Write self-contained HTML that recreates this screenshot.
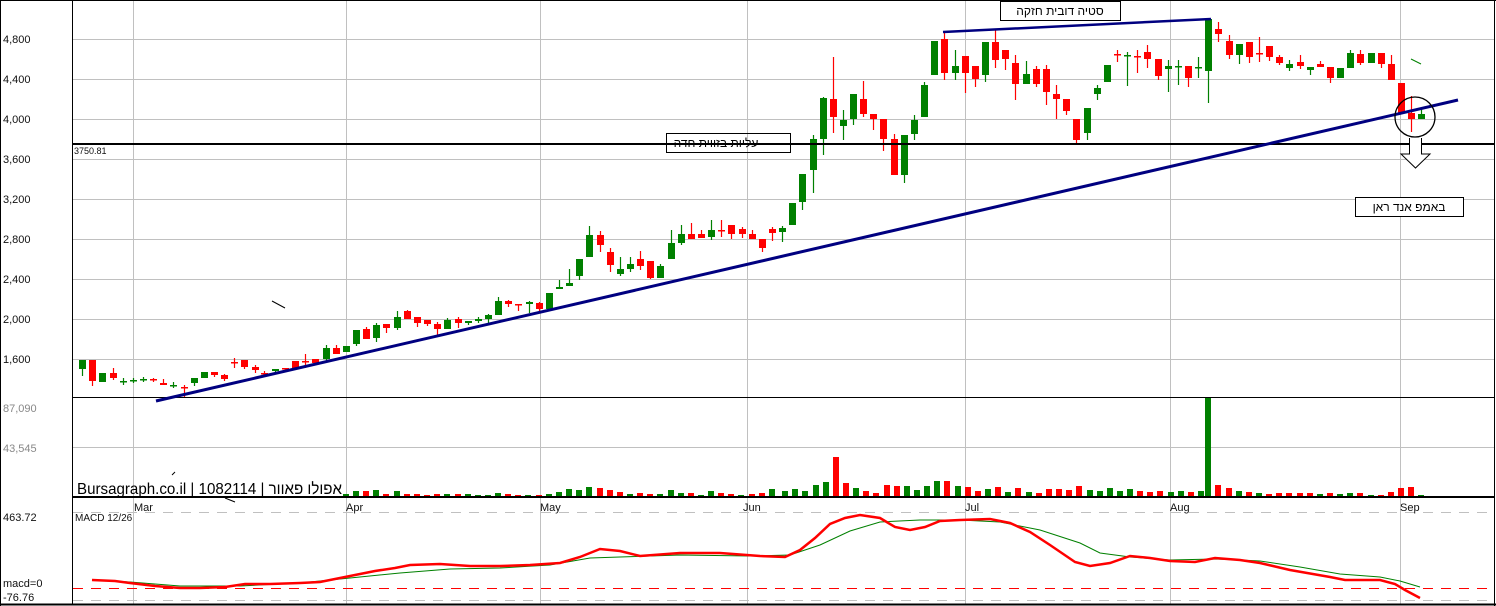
<!DOCTYPE html>
<html><head><meta charset="utf-8"><style>
html,body{margin:0;padding:0;background:#fff;}
svg{display:block;font-family:"Liberation Sans",Arial,"Noto Sans CJK SC",sans-serif;}
</style></head><body>
<svg id="s" xmlns="http://www.w3.org/2000/svg" width="1496" height="606" viewBox="0 0 1496 606">
<rect width="1496" height="606" fill="#fff"/>
<g id="grid" stroke="#c0c0c0" stroke-width="1"></g>
<g id="vol"></g>
<g id="cand"></g>
<g stroke="#000" fill="none">
<line x1="0.5" y1="0" x2="0.5" y2="606" stroke-width="1"/>
<line x1="0" y1="0.5" x2="1496" y2="0.5" stroke-width="1"/>
<line x1="1494.5" y1="0" x2="1494.5" y2="606" stroke-width="1"/>
<line x1="72.5" y1="0" x2="72.5" y2="605" stroke-width="1"/>
<line x1="72" y1="397.5" x2="1495" y2="397.5" stroke-width="1"/>
<line x1="72" y1="497" x2="1495" y2="497" stroke-width="2"/>
<line x1="0" y1="604.5" x2="1496" y2="604.5" stroke-width="2"/>
<line x1="72" y1="144" x2="1495" y2="144" stroke-width="2"/>
</g>
<g stroke="#c0c0c0" stroke-dasharray="10,8"><line x1="73" y1="512.5" x2="1494" y2="512.5"/><line x1="73" y1="600.5" x2="1494" y2="600.5"/></g>
<line x1="73" y1="588.5" x2="1494" y2="588.5" stroke="#ff0000" stroke-dasharray="10,8"/>
<line x1="156" y1="401" x2="1458" y2="100" stroke="#000080" stroke-width="3"/>
<line x1="943" y1="32" x2="1211" y2="19" stroke="#000080" stroke-width="2.5"/>
<rect x="1000.5" y="1.5" width="120" height="19" fill="none" stroke="#000"/>
<text x="1060" y="15" font-size="12" text-anchor="middle" fill="#000">סטיה דובית חזקה</text>
<rect x="666.5" y="133.5" width="124" height="19" fill="none" stroke="#000"/>
<text x="716" y="147" font-size="12" text-anchor="middle" fill="#000">עליות בזווית חדה</text>
<rect x="1355.5" y="197.5" width="108" height="19" fill="#fff" stroke="#000"/>
<text x="1409" y="211" font-size="12" text-anchor="middle" fill="#000">באמפ אנד ראן</text>
<circle cx="1415" cy="117" r="20" fill="none" stroke="#000" stroke-width="1.3"/>
<path d="M1409.5 138 V154 H1401 L1415.5 168 L1430 154 H1421.5 V138" fill="#fff" stroke="#000" stroke-width="1"/>
<line x1="1411" y1="59" x2="1421" y2="64" stroke="#008000"/>
<line x1="272" y1="301" x2="285" y2="308" stroke="#000"/>
<line x1="225" y1="498" x2="235" y2="502" stroke="#000"/>
<line x1="172" y1="475" x2="175" y2="472" stroke="#000"/>
<g font-size="11" fill="#111">
<text x="3" y="43">4,800</text><text x="3" y="83">4,400</text><text x="3" y="123">4,000</text>
<text x="3" y="163">3,600</text><text x="3" y="203">3,200</text><text x="3" y="243">2,800</text>
<text x="3" y="283">2,400</text><text x="3" y="323">2,000</text><text x="3" y="363">1,600</text>
<text x="74" y="154" font-size="9">3750.81</text>
<text x="3" y="412" fill="#888">87,090</text><text x="3" y="452" fill="#888">43,545</text>
<text x="3" y="521">463.72</text><text x="75" y="521" font-size="10">MACD 12/26</text>
<text x="3" y="587">macd=0</text><text x="3" y="601">-76.76</text>
<text x="134" y="511">Mar</text><text x="346" y="511">Apr</text><text x="540" y="511">May</text>
<text x="743" y="511">Jun</text><text x="965" y="511">Jul</text><text x="1170" y="511">Aug</text><text x="1400" y="511">Sep</text>
</g>
<text x="77" y="494" font-size="16" fill="#000" textLength="265" lengthAdjust="spacingAndGlyphs">Bursagraph.co.il | 1082114 | אפולו פאוור</text>
<polyline fill="none" stroke="#008000" stroke-width="1" points="92,580 130,582 180,586 240,586 300,583 350,578 400,573 450,569 500,568 550,565 590,558 620,557 680,555 750,556 790,555 820,545 850,531 880,522 920,520 960,520 1000,522 1040,530 1080,543 1100,553 1130,557 1170,560 1215,559 1240,560 1260,561 1300,567 1340,574 1380,577 1400,581 1420,587"/>
<polyline fill="none" stroke="#ff0000" stroke-width="2.5" points="92,580 115,581 130,583 155,586 180,588 200,588 225,587 245,584 270,584 300,583 320,582 340,578 355,575 375,571 395,568 410,565 440,564 470,566 500,566 530,565 560,563 580,557 600,549 620,551 640,556 680,553 720,553 760,556 785,557 800,550 815,538 830,524 845,518 860,515 880,518 895,527 910,530 925,527 940,521 960,520 990,519 1010,523 1030,532 1050,545 1075,562 1090,566 1110,563 1130,556 1150,558 1170,561 1195,562 1215,558 1240,560 1260,563 1290,570 1330,577 1345,580 1380,580 1395,584 1405,590 1420,598"/>
</svg>
<script>
var NS="http://www.w3.org/2000/svg";
function el(p,t,a){var e=document.createElementNS(NS,t);for(var k in a)e.setAttribute(k,a[k]);p.appendChild(e);return e;}
var g=document.getElementById("grid");
[39,79,119,159,199,239,279,319,359,447].forEach(function(y){el(g,"line",{x1:73,x2:1494,y1:y+.5,y2:y+.5});});
[133,346,540,747,965,1170,1400].forEach(function(x){el(g,"line",{x1:x+.5,x2:x+.5,y1:1,y2:604});});
var C=[[79,360,369,360,376,'g'],[89,360,381,360,386,'r'],[99,373,382,373,382,'g'],[110,373,378,368,380,'r'],[120,381,382,378,385,'g'],[130,380,381,378,383,'g'],[140,379,380,377,382,'g'],[150,379,380,378,382,'r'],[160,383,385,379,385,'r'],[170,385,386,382,388,'g'],[181,387,388,385,397,'r'],[191,378,383,378,386,'g'],[201,372,378,372,378,'g'],[211,372,375,372,377,'r'],[221,375,379,374,381,'r'],[231,362,363,358,368,'r'],[241,360,367,360,369,'r'],[252,367,370,365,373,'r'],[261,373,374,371,376,'r'],[272,369,371,369,373,'g'],[282,368,369,368,369,'r'],[292,361,368,361,368,'r'],[302,361,362,354,368,'r'],[312,359,363,359,363,'r'],[323,348,359,345,362,'g'],[333,348,354,345,354,'r'],[343,346,352,346,352,'g'],[353,330,344,330,346,'g'],[363,329,339,327,339,'r'],[373,325,338,323,342,'g'],[383,324,328,324,333,'r'],[394,317,328,311,330,'g'],[404,311,319,310,319,'r'],[414,317,323,317,327,'r'],[424,320,324,320,326,'r'],[434,324,329,322,335,'r'],[444,320,329,318,329,'g'],[455,319,323,317,328,'r'],[465,321,323,321,325,'g'],[475,319,321,317,323,'g'],[485,315,319,314,323,'g'],[495,301,315,297,315,'g'],[505,301,304,300,307,'r'],[515,304,305,304,311,'r'],[526,302,304,301,313,'g'],[536,303,309,302,311,'r'],[546,293,309,293,309,'g'],[556,287,289,280,289,'g'],[566,283,286,269,286,'g'],[576,259,276,259,280,'g'],[586,235,257,226,257,'g'],[597,235,245,231,252,'r'],[607,252,265,248,272,'r'],[617,269,274,257,276,'g'],[627,264,269,257,272,'g'],[637,259,266,251,270,'r'],[647,261,278,261,279,'r'],[657,266,278,264,278,'g'],[668,243,259,230,259,'g'],[678,234,243,225,245,'g'],[688,234,239,223,239,'r'],[698,234,238,230,238,'r'],[708,230,237,220,240,'g'],[718,230,231,220,237,'r'],[728,225,234,225,239,'r'],[739,229,234,227,238,'r'],[749,234,239,230,239,'r'],[759,239,248,239,252,'r'],[769,229,233,227,241,'r'],[779,228,232,226,242,'g'],[789,203,225,203,225,'g'],[799,174,202,174,210,'g'],[810,139,170,135,193,'g'],[820,98,139,97,155,'g'],[830,99,117,57,133,'r'],[840,120,126,110,140,'g'],[850,94,119,94,125,'g'],[860,99,114,81,117,'r'],[870,114,119,114,130,'r'],[880,119,139,119,151,'r'],[891,139,175,134,175,'r'],[901,135,175,135,183,'g'],[911,120,134,115,140,'g'],[921,85,117,82,117,'g'],[931,41,75,41,75,'g'],[941,39,73,32,80,'r'],[952,66,73,50,80,'g'],[962,56,73,56,93,'r'],[972,66,79,66,87,'r'],[982,42,75,42,82,'g'],[992,42,60,30,68,'r'],[1002,50,59,50,70,'r'],[1012,63,84,55,100,'r'],[1023,74,84,61,84,'g'],[1033,69,84,66,87,'r'],[1043,69,92,65,105,'r'],[1053,94,99,85,119,'r'],[1063,99,111,99,115,'r'],[1073,119,140,119,143,'r'],[1084,108,133,108,140,'g'],[1094,88,94,85,100,'g'],[1104,65,82,65,82,'g'],[1114,54,55,50,62,'r'],[1124,55,56,52,86,'g'],[1134,56,57,50,73,'r'],[1144,52,59,45,68,'r'],[1155,59,76,59,80,'r'],[1165,66,69,60,92,'g'],[1175,66,67,60,85,'g'],[1185,66,78,66,87,'r'],[1195,67,68,57,78,'g'],[1205,19,71,19,103,'g'],[1215,29,34,22,42,'r'],[1226,41,55,35,59,'r'],[1236,44,55,44,64,'g'],[1246,42,57,42,63,'r'],[1256,53,54,37,62,'r'],[1266,46,57,46,61,'r'],[1276,57,63,55,65,'r'],[1286,64,68,60,71,'g'],[1297,62,66,55,69,'r'],[1307,67,70,67,75,'g'],[1317,64,67,61,67,'r'],[1327,67,78,67,83,'r'],[1337,68,78,68,78,'g'],[1347,53,68,50,68,'g'],[1357,54,63,50,65,'r'],[1368,53,63,53,63,'g'],[1378,53,64,53,68,'r'],[1388,64,80,55,80,'r'],[1398,83,113,83,113,'r'],[1408,113,119,96,132,'r'],[1418,114,119,109,119,'g']];
var cg=document.getElementById("cand");
C.forEach(function(c){var col=c[5]=='g'?'#008000':'#ff0000';
el(cg,"line",{x1:c[0]+3.5,x2:c[0]+3.5,y1:c[3],y2:c[4],stroke:col,"stroke-width":1.2});
el(cg,"rect",{x:c[0],y:c[1],width:7,height:Math.max(1.5,c[2]-c[1]),fill:col});});
var V=[[343,2,'g'],[353,5,'g'],[363,5,'r'],[373,6,'g'],[383,2,'r'],[394,5,'g'],[404,2,'r'],[414,2,'r'],[424,1,'r'],[434,2,'r'],[444,2,'g'],[455,2,'r'],[465,2,'g'],[475,1,'g'],[485,1,'g'],[495,3,'g'],[505,2,'r'],[515,1,'r'],[525,1,'g'],[536,1,'r'],[546,2,'g'],[556,4,'g'],[566,7,'g'],[576,6,'g'],[586,9,'g'],[597,8,'r'],[607,6,'r'],[617,4,'r'],[627,2,'g'],[637,3,'r'],[647,2,'r'],[657,2,'g'],[668,6,'g'],[678,3,'g'],[688,3,'r'],[698,1,'g'],[708,5,'g'],[718,3,'r'],[728,2,'r'],[738,1,'g'],[749,2,'r'],[759,3,'r'],[769,7,'g'],[782,5,'g'],[792,7,'g'],[802,5,'g'],[813,11,'g'],[823,14,'g'],[833,39,'r'],[843,13,'r'],[853,8,'g'],[863,5,'r'],[873,3,'r'],[884,11,'r'],[894,10,'r'],[904,10,'g'],[914,6,'g'],[924,10,'g'],[934,15,'g'],[944,15,'r'],[955,10,'g'],[965,9,'r'],[975,5,'r'],[985,7,'g'],[995,9,'r'],[1005,4,'g'],[1015,8,'r'],[1026,4,'g'],[1036,3,'r'],[1046,7,'r'],[1056,7,'r'],[1066,6,'r'],[1076,10,'r'],[1087,6,'g'],[1097,5,'g'],[1107,8,'g'],[1117,5,'g'],[1127,7,'g'],[1137,5,'r'],[1147,4,'r'],[1157,5,'r'],[1168,4,'g'],[1178,5,'g'],[1188,4,'r'],[1198,5,'g'],[1205,99,'g'],[1215,11,'r'],[1226,8,'r'],[1236,5,'g'],[1246,4,'r'],[1256,3,'g'],[1266,2,'r'],[1276,3,'r'],[1286,3,'r'],[1297,3,'r'],[1307,3,'r'],[1317,2,'g'],[1327,3,'r'],[1337,2,'g'],[1347,3,'g'],[1357,3,'r'],[1368,1,'g'],[1378,1,'r'],[1388,4,'r'],[1398,8,'r'],[1408,9,'r'],[1418,1,'g']];
var vg=document.getElementById("vol");
V.forEach(function(v){el(vg,"rect",{x:v[0],y:496-v[1],width:6,height:v[1],fill:v[2]=='g'?'#008000':'#ff0000'});});
</script>
</body></html>
